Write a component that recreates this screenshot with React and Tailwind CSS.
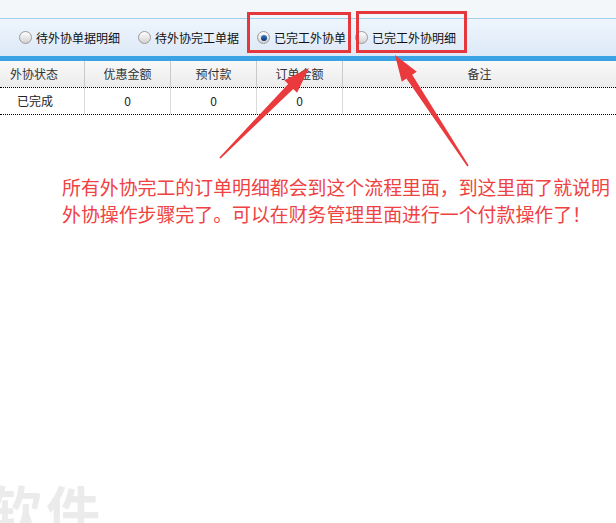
/**
 * 外协完工单据页面（带红色标注说明）
 */

const FONT = { fontFamily: '"Noto Sans CJK SC", "Noto Sans", sans-serif' };

function Radio({ checked }) {
    return (
        <span className="relative inline-flex w-[13px] h-[13px] rounded-full border border-[#9a9a9a] bg-gradient-to-b from-[#ffffff] to-[#d2d2d2] items-center justify-center shrink-0">
            {checked && <span className="w-[6px] h-[6px] rounded-full bg-gradient-to-b from-[#3b7fd0] to-[#0c2f66]" />}
        </span>
    );
}

// 红色箭头：从 tail 指向 tip
function arrowPoints(tx, ty, px, py) {
    const dx = px - tx;
    const dy = py - ty;
    const len = Math.sqrt(dx * dx + dy * dy);
    const ux = dx / len;
    const uy = dy / len;
    const nx = -uy;
    const ny = ux;
    const bx = px - ux * 26;
    const by = py - uy * 26;
    const pts = [
        [tx + nx * 0.8, ty + ny * 0.8],
        [bx + nx * 3.5, by + ny * 3.5],
        [bx + nx * 9, by + ny * 9],
        [px, py],
        [bx - nx * 9, by - ny * 9],
        [bx - nx * 3.5, by - ny * 3.5],
        [tx - nx * 0.8, ty - ny * 0.8],
    ];
    return pts.map((p) => p[0].toFixed(1) + ',' + p[1].toFixed(1)).join(' ');
}

export default function App() {
    const cols = [
        { label: '外协状态', value: '已完成', w: 'w-[85px]' },
        { label: '优惠金额', value: '0', w: 'w-[86px]' },
        { label: '预付款', value: '0', w: 'w-[86px]' },
        { label: '订单金额', value: '0', w: 'w-[86px]' },
        { label: '备注', value: '', w: 'flex-1' },
    ];

    return (
        <div className="relative w-[616px] h-[523px] overflow-hidden bg-white text-[#222]" style={FONT}>
            {/* ==================== 顶部空白条 ==================== */}
            <div className="h-[19px] bg-[#f4f7fa] border-b border-[#9fd0ee]" />

            {/* ==================== 单选工具栏 ==================== */}
            <div className="h-[37px] bg-gradient-to-b from-[#eef5fd] to-[#dde9f7] flex items-center text-[12px] text-[#111]">
                <div className="flex items-center ml-[19px]">
                    <Radio />
                    <span className="ml-[4px]">待外协单据明细</span>
                </div>
                <div className="flex items-center ml-[18px]">
                    <Radio />
                    <span className="ml-[4px]">待外协完工单据</span>
                </div>
                <div className="flex items-center ml-[18px]">
                    <Radio checked />
                    <span className="ml-[4px]">已完工外协单</span>
                </div>
                <div className="flex items-center ml-[9px]">
                    <Radio />
                    <span className="ml-[4px]">已完工外协明细</span>
                </div>
            </div>
            <div className="h-[5px] bg-[#3ba2e6]" />

            {/* ==================== 表格 ==================== */}
            <div className="flex h-[27px] bg-gradient-to-b from-[#f9f9f9] to-[#ececec] border-b border-dotted border-black text-[12px] text-[#333]">
                {cols.map((c, i) => (
                    <div
                        key={c.label}
                        className={`${c.w} flex items-center ${i === 0 ? 'pl-[10px]' : 'justify-center'} ${i < cols.length - 1 ? 'border-r border-[#c9c9c9]' : ''}`}
                    >
                        {c.label}
                    </div>
                ))}
            </div>
            <div className="flex h-[27px] border-b border-dotted border-black text-[12px] text-[#222]">
                {cols.map((c, i) => (
                    <div
                        key={c.label}
                        className={`${c.w} flex items-center ${i === 0 ? 'pl-[17px]' : 'justify-center'} ${i < cols.length - 1 ? 'border-r border-[#dadada]' : ''}`}
                    >
                        {c.value}
                    </div>
                ))}
            </div>

            {/* ==================== 标注说明 ==================== */}
            <div className="mt-[58px] pl-[62px] text-[18.9px] leading-[27px] text-[#ef4242] whitespace-nowrap">
                <div>所有外协完工的订单明细都会到这个流程里面，到这里面了就说明</div>
                <div>外协操作步骤完了。可以在财务管理里面进行一个付款操作了！</div>
            </div>

            {/* 红框 */}
            <div className="absolute left-[247px] top-[12px] w-[104px] h-[41px] border-[3px] border-[#e5383c]" />
            <div className="absolute left-[356px] top-[11px] w-[111px] h-[42px] border-[3px] border-[#e5383c]" />

            {/* 箭头 */}
            <svg className="absolute left-0 top-0" width="616" height="523" viewBox="0 0 616 523">
                <polygon points={arrowPoints(220, 158, 309, 68)} fill="#ea3a3d" />
                <polygon points={arrowPoints(468, 166, 395, 55)} fill="#ea3a3d" />
            </svg>

            {/* 水印 */}
            <div className="absolute left-[-12px] top-[474px] text-[54px] leading-[70px] font-bold text-[#ebebeb] tracking-[4px]">软件</div>
        </div>
    );
}
